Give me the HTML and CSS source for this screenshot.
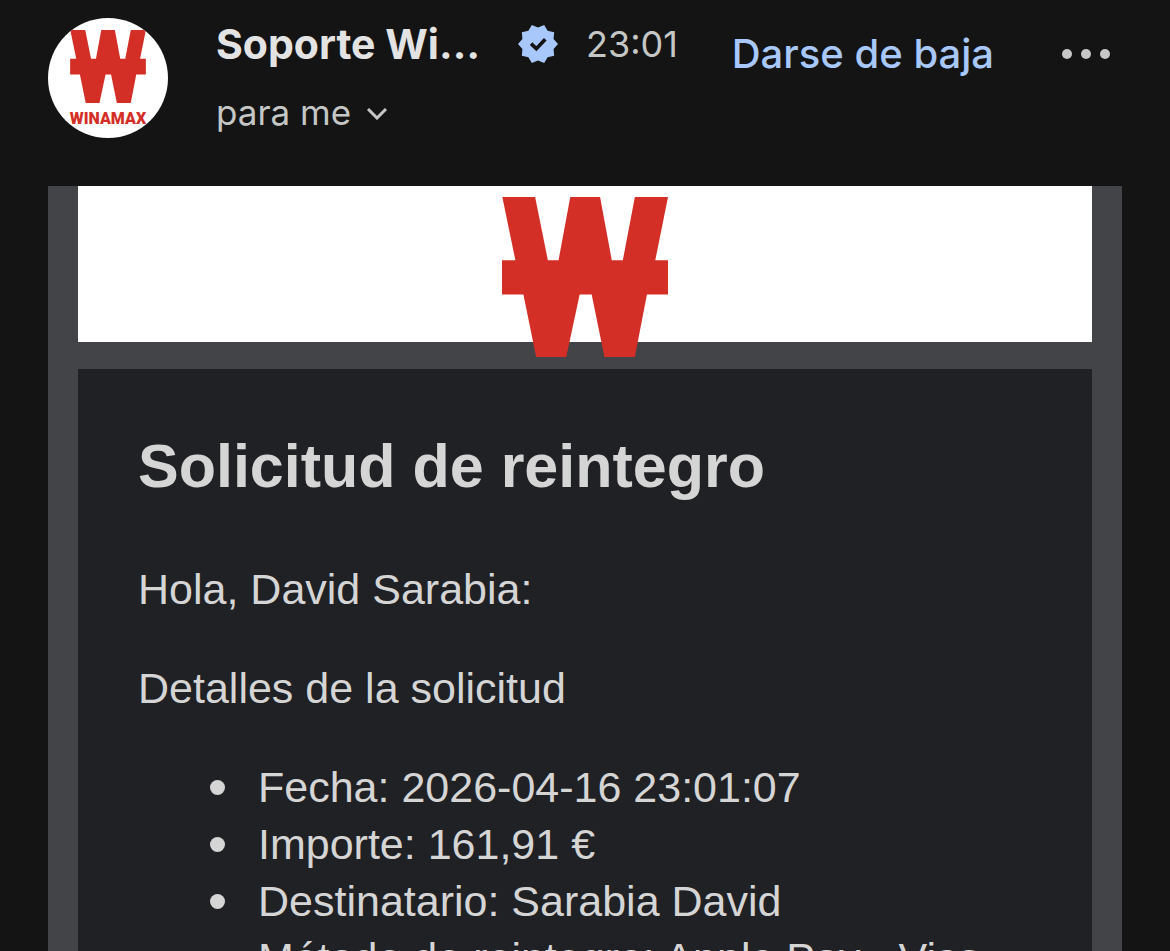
FILE: index.html
```html
<!DOCTYPE html>
<html lang="es">
<head>
    <meta charset="UTF-8">
    <meta name="viewport" content="width=device-width, initial-scale=1.0">
    <title>Solicitud de reintegro</title>
    <link rel="stylesheet" href="styles.css">
</head>
<body>

<!-- Sender row -->
<header class="mail-header">
    <div class="avatar">
        <svg class="avatar-mark" viewBox="0 0 496 478" aria-hidden="true">
            <path d="M1 0H99L137 189H169L204 0H293L328 189H361L397 0H496L458 189H496V291H433L397 478H306L268 291H232L192 478H102L64 291H0V189H40Z"/>
        </svg>
        <span class="avatar-name">WINAMAX</span>
    </div>

    <div class="sender">
        <div class="sender-line">
            <span class="sender-name">Soporte Wi…</span>
            <svg class="verified" viewBox="1 1 22 22" role="img" aria-label="Verificado">
                <path class="verified-seal" d="M23 12l-2.44-2.79.34-3.69-3.61-.82-1.89-3.2L12 2.96 8.6 1.5 6.71 4.69 3.1 5.5l.34 3.7L1 12l2.44 2.79-.34 3.7 3.61.82L8.6 22.5l3.4-1.47 3.4 1.46 1.89-3.19 3.61-.82-.34-3.69z"/>
                <path class="verified-check" d="M8.2 11.8l2.9 2.8 4.9-5.2"/>
            </svg>
            <time class="sent-time">23:01</time>
        </div>
        <button type="button" class="recipient">
            para me
            <svg class="chevron" viewBox="0 0 20 12" aria-hidden="true"><path d="M1 1l9 9 9-9"/></svg>
        </button>
    </div>

    <div class="actions">
        <a class="unsubscribe" href="#">Darse de baja</a>
        <button type="button" class="more" aria-label="Más opciones">
            <svg viewBox="0 0 48 10" aria-hidden="true">
                <circle cx="5" cy="5" r="5"/><circle cx="24" cy="5" r="5"/><circle cx="43" cy="5" r="5"/>
            </svg>
        </button>
    </div>
</header>

<!-- Message body -->
<main class="message">
    <div class="banner">
        <svg class="logo" viewBox="0 0 496 478" role="img" aria-label="Winamax">
            <path d="M1 0H99L137 189H169L204 0H293L328 189H361L397 0H496L458 189H496V291H433L397 478H306L268 291H232L192 478H102L64 291H0V189H40Z"/>
        </svg>
    </div>
    <article class="card">
        <h1>Solicitud de reintegro</h1>
        <p>Hola, David Sarabia:</p>
        <p>Detalles de la solicitud</p>
        <ul>
            <li>Fecha: 2026-04-16 23:01:07</li>
            <li>Importe: 161,91 €</li>
            <li>Destinatario: Sarabia David</li>
            <li>Método de reintegro: Apple Pay - Visa</li>
        </ul>
    </article>
</main>

</body>
</html>
```
FILE: styles.css
```css
* {
    box-sizing: border-box;
}
body {
    display: flex;
    flex-direction: column;
    height: 100vh;
    margin: 0;
    overflow: hidden;
    background-color: #141414;
    font-family: Inter, "Noto Sans", sans-serif;
}
button {
    padding: 0;
    border: none;
    background: none;
    font: inherit;
    cursor: pointer;
}
.mail-header {
    display: flex;
    flex-shrink: 0;
    gap: 48px;
    padding: 18px 60px 48px 48px;
}
.avatar {
    display: flex;
    flex-direction: column;
    align-items: center;
    flex-shrink: 0;
    width: 120px;
    height: 120px;
    padding-top: 12px;
    border-radius: 50%;
    background-color: #fff;
    overflow: hidden;
}
.avatar-mark {
    width: 76px;
    height: 73px;
    flex-shrink: 0;
    fill: #d32f27;
}
.avatar-name {
    margin-top: 4px;
    color: #d32f27;
    font-family: Roboto, sans-serif;
    font-size: 16px;
    font-weight: 900;
    line-height: 24px;
}
.sender {
    display: flex;
    flex-direction: column;
    align-items: flex-start;
    gap: 18px;
}
.sender-line {
    display: flex;
    align-items: center;
    white-space: nowrap;
}
.sender-name {
    color: #e3e3e3;
    font-size: 41px;
    font-weight: bold;
    line-height: 52px;
}
.verified {
    width: 40px;
    height: 40px;
    margin: 0 28px 0 38px;
}
.verified-seal {
    fill: #a8c7fa;
}
.verified-check {
    fill: none;
    stroke: #141414;
    stroke-width: 2;
}
.sent-time, .recipient {
    color: #c4c7c5;
    font-size: 36px;
    line-height: 48px;
}
.recipient {
    display: flex;
    align-items: center;
    gap: 16px;
    font-size: 35px;
}
.chevron {
    width: 20px;
    height: 12px;
    margin-top: 4px;
    fill: none;
    stroke: #c4c7c5;
    stroke-width: 3;
}
.actions {
    display: flex;
    align-items: center;
    align-self: flex-start;
    gap: 68px;
    margin-left: auto;
    padding-top: 10px;
    white-space: nowrap;
}
.unsubscribe {
    color: #a8c7fa;
    font-size: 40px;
    font-weight: 500;
    line-height: 52px;
    text-decoration: none;
}
.more svg {
    display: block;
    width: 48px;
    height: 10px;
    fill: #c7c7c7;
}
.message {
    display: flex;
    flex: 1 0 auto;
    flex-direction: column;
    gap: 27px;
    margin: 0 48px;
    padding: 0 30px;
    background-color: #434447;
}
/* the logo hangs over the lower edge of the banner */
.banner {
    display: flex;
    justify-content: center;
    align-items: flex-start;
    height: 156px;
    padding-top: 11px;
    background-color: #fff;
}
.logo {
    flex-shrink: 0;
    width: 166px;
    height: 160px;
    fill: #d32f27;
}
.card {
    flex: 1;
    padding: 58px 60px;
    background-color: #202124;
    color: #d5d5d5;
    font-family: "Liberation Sans", Arial, sans-serif;
    font-size: 43px;
    line-height: 57px;
}
.card h1 {
    margin: 0 0 56px;
    font-size: 61px;
    line-height: 78px;
}
.card p {
    margin: 0 0 42px;
}
.card ul {
    margin: 0;
    padding-left: 72px;
    list-style: none;
}
.card li {
    display: flex;
    align-items: center;
    gap: 33px;
}
.card li::before {
    content: "";
    width: 15px;
    height: 15px;
    border-radius: 50%;
    background-color: #d5d5d5;
}
```
